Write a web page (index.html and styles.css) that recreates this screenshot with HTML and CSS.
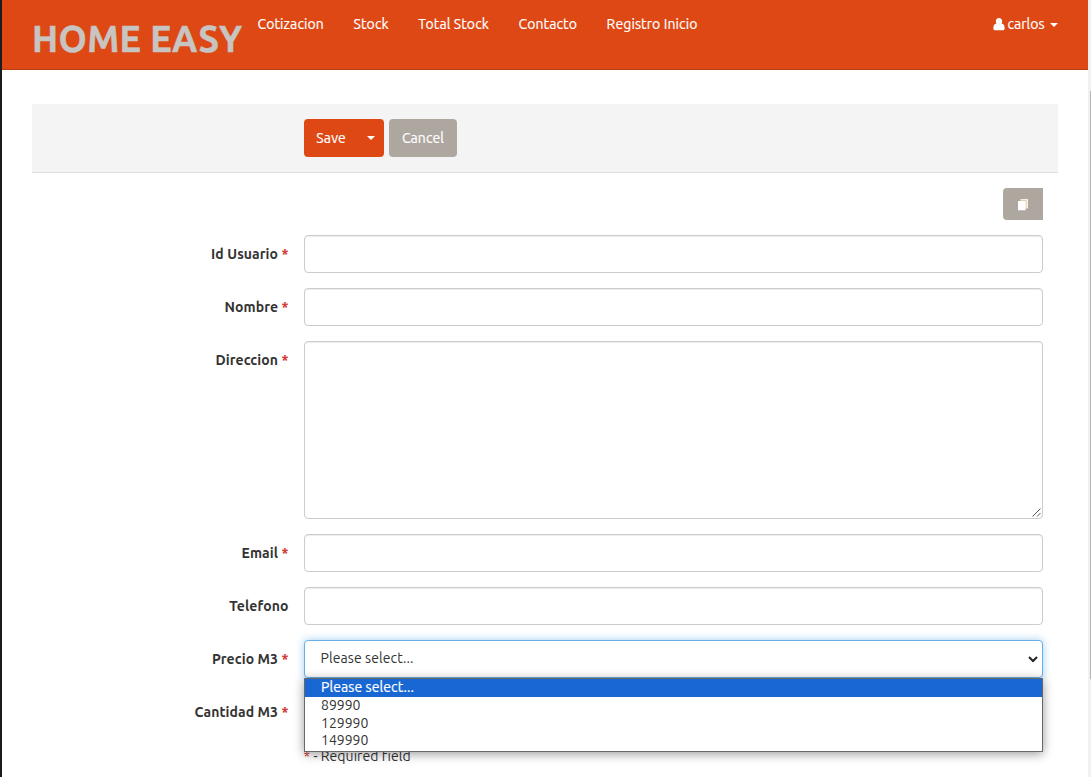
FILE: index.html
```html
<!DOCTYPE html>
<html lang="es">
<head>
<meta charset="utf-8">
<title>Home Easy</title>
<link rel="stylesheet" href="styles.css">
</head>
<body>
<div class="window">
  <div class="page">
    <nav class="navbar">
      <div class="brand">HOME EASY</div>
      <div class="menu">
        <a>Cotizacion</a><a>Stock</a><a>Total Stock</a><a>Contacto</a><a>Registro Inicio</a>
      </div>
      <div class="user">
        <svg width="12" height="13" viewBox="0 0 12 13"><path fill="currentColor" d="M6 0C8 0 9.200 1.400 9.200 3.300 9.200 4.300 8.900 5 8.500 5.600 10.500 5.800 11.600 7.300 11.600 10V10.800C11.600 11.600 11.100 12.200 10.300 12.200H1.700C.9 12.200.4 11.600.4 10.800V10C.4 7.300 1.500 5.800 3.500 5.600 3.100 5 2.800 4.300 2.800 3.300 2.800 1.400 4 0 6 0Z"/></svg>
        <span>carlos</span><i class="caret"></i>
      </div>
    </nav>
    <div class="actions">
      <div class="save"><span>Save</span><i class="caret"></i></div>
      <div class="cancel"><span>Cancel</span></div>
    </div>
    <div class="tools">
      <div class="copy"><svg width="10" height="12" viewBox="0 0 10 12"><path fill="#fbf0e2" d="M2.500 0H10V9.500H2.500Z"/><path fill="none" stroke="#c9b496" stroke-width=".7" d="M2 1.700H8V10"/><path fill="#fff" d="M0 2H7.600V11.300H0Z"/></svg></div>
    </div>
    <form class="form">
      <div class="row"><label>Id Usuario <b>*</b></label><div class="field"></div></div>
      <div class="row"><label>Nombre <b>*</b></label><div class="field"></div></div>
      <div class="row"><label>Direccion <b>*</b></label><div class="field area"><svg width="9" height="9" viewBox="0 0 9 9"><path fill="none" stroke="#555" d="M.5 8.500 8.500.5M5 8.500 8.500 5"/></svg></div></div>
      <div class="row"><label>Email <b>*</b></label><div class="field"></div></div>
      <div class="row"><label>Telefono</label><div class="field"></div></div>
      <div class="row"><label>Precio M3 <b>*</b></label>
        <div class="field select"><span>Please select...</span><svg width="10" height="7" viewBox="0 0 10 7"><path fill="none" stroke="#222" stroke-width="2" d="M1 1 5 5 9 1"/></svg>
          <div class="options"><div class="on">Please select...</div><div>89990</div><div>129990</div><div>149990</div></div>
        </div>
      </div>
      <div class="row"><label>Cantidad M3 <b>*</b></label><div class="field"></div></div>
      <div class="note"><b>*</b> <span>- Required field</span></div>
    </form>
  </div>
  <div class="scrollbar"><div class="thumb"></div></div>
</div>
</body>
</html>
```
FILE: styles.css
```css
* { box-sizing: border-box; }
body { margin: 0; font: 14px/20px Ubuntu, "Noto Sans", sans-serif; color: #333; background: #fff; }
.window { display: flex; width: 1091px; height: 777px; overflow: hidden; border-left: 2px solid #1d1b1c; }
.page { width: 1086px; }
.scrollbar { width: 3px; background: #f1f1f1; padding: 91px 0 0 2px; }
.thumb { height: 588px; background: #b5b5b5; }
.navbar { display: flex; height: 70px; background: #dd4814; border-bottom: 1px solid #b64014; color: #fff; padding: 0 30px 0 30px; }
.brand { width: 225.500px; padding-top: 19px; font-size: 36px; line-height: 40px; font-weight: 700; color: #c8c4c2; letter-spacing: .35px; -webkit-text-stroke: .5px #c8c4c2; white-space: nowrap; }
.menu { display: flex; gap: 29.600px; padding-top: 14px; white-space: nowrap; letter-spacing: .11px; -webkit-text-stroke: .2px #fff; }
.menu a { display: block; }
.user { display: flex; margin-left: auto; padding-top: 14px; -webkit-text-stroke: .2px #fff; }
.user svg { margin: 4px 3px 0 0; }
.caret { border: 4px solid transparent; border-top-color: currentColor; border-bottom: 0; width: 8px; height: 4px; }
.user .caret { margin: 9px 0 0 5.500px; }
.actions { display: flex; gap: 5px; margin: 34px 30px 0; height: 69px; padding: 15px 0 0 272px; background: #f4f4f4; border-bottom: 1px solid #dedede; color: #fff; -webkit-text-stroke: .2px #fff; }
.save, .cancel { display: flex; height: 38px; align-items: center; border-radius: 4px; }
.save { width: 80px; justify-content: space-between; padding: 0 9px 0 12.300px; background: #dd4814; letter-spacing: .15px; }
.cancel { width: 68px; justify-content: center; background: #aea79f; letter-spacing: .1px; }
.tools { display: flex; justify-content: flex-end; padding: 15px 45px 15px 0; }
.copy { display: flex; align-items: center; justify-content: center; width: 40px; height: 32px; padding-top: 1px; background: #aea79f; border-radius: 4px 0 0 4px; }
.form { display: flex; flex-direction: column; gap: 15px; padding: 0 45px 0 0; margin: 0; }
.row { display: flex; gap: 15.500px; }
.row label { width: 286.500px; padding-top: 9px; text-align: right; font-weight: 700; letter-spacing: .08px; white-space: nowrap; }
b { color: #d23430; font-weight: 700; }
.field { width: 739px; height: 38px; border: 1px solid #ccc; border-radius: 4px; background: #fff; box-shadow: inset 0 1px 1px rgba(0,0,0,.075); }
.area { display: flex; align-items: flex-end; justify-content: flex-end; height: 178px; padding: 0 1px 1px 0; }
.select { position: relative; display: flex; align-items: center; justify-content: space-between; padding: 0 4px 1px 15.500px; border-color: #66afe9; box-shadow: 0 0 8px rgba(102,175,233,.6); letter-spacing: .08px; }
.select > span { padding-bottom: 1px; }
.select > svg { margin-top: 1px; }
.options { position: absolute; z-index: 1; top: 37px; left: -1px; width: 739px; height: 74px; border: 1px solid #686868; background: #fff; box-shadow: 0 2px 10px rgba(0,0,0,.4); }
.options div { height: 17.670px; padding-left: 16px; line-height: 16px; letter-spacing: 0; }
.options .on { height: 18px; background: #1967d2; color: #fff; letter-spacing: .08px; -webkit-text-stroke: .2px #fff; }
.note { padding-left: 301.500px; letter-spacing: .05px; white-space: nowrap; }
.note b { font-weight: 400; }
```
